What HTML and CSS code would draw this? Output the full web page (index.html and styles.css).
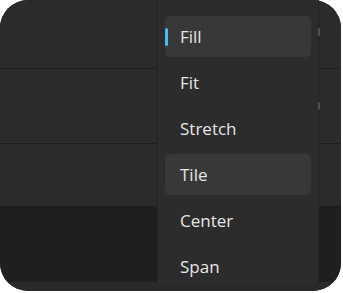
FILE: index.html
```html
<!DOCTYPE html>
<html>
<head>
    <meta charset="UTF-8">
    <title>Choose a fit</title>
    <link rel="stylesheet" href="styles.css">
</head>
<body>
    <div class="frame">
        <div class="settings">
            <div class="setting-row row-1"></div>
            <div class="setting-row row-2"></div>
            <div class="setting-row row-3"></div>
            <div class="setting-dark"></div>
            <div class="setting-foot"></div>
        </div>

        <!-- fit dropdown, open -->
        <div class="fit-menu">
            <div class="fit-item selected">Fill</div>
            <div class="fit-item">Fit</div>
            <div class="fit-item">Stretch</div>
            <div class="fit-item hover">Tile</div>
            <div class="fit-item">Center</div>
            <div class="fit-item">Span</div>
        </div>
        <span class="edge-mark mark-1"></span>
        <span class="edge-mark mark-2"></span>
    </div>
</body>
</html>
```

FILE: styles.css
```css
* {
    margin: 0;
    padding: 0;
    box-sizing: border-box;
}

body {
    background: #ffffff;
    font-family: "Open Sans", "Noto Sans", Arial, sans-serif;
}

.frame {
    position: relative;
    width: 341px;
    height: 291px;
    border-radius: 28px;
    overflow: hidden;
    background: #2b2b2b;
}

.settings {
    display: flex;
    flex-direction: column;
    height: 100%;
}

.setting-row {
    background: #2b2b2b;
    border-bottom: 1px solid #1d1d1d;
}

.row-1 {
    height: 69px;
}

.row-2 {
    height: 75px;
}

.row-3 {
    height: 63px;
}

.setting-dark {
    height: 75px;
    background: #1f1f1f;
}

.setting-foot {
    flex: 1;
    background: #2a2a2a;
}

.fit-menu {
    position: absolute;
    left: 157px;
    top: 0;
    width: 162px;
    height: 282px;
    padding: 16px 7px 0;
    display: flex;
    flex-direction: column;
    gap: 5px;
    background: #2c2c2c;
    border-left: 1px solid #232323;
    border-right: 1px solid #232323;
}

.fit-item {
    position: relative;
    flex: none;
    height: 41px;
    padding-left: 15px;
    border-radius: 5px;
    font-size: 17px;
    font-weight: 500;
    line-height: 41px;
    color: #e6e6e6;
}

.fit-item.selected,
.fit-item.hover {
    background: #383838;
}

.fit-item.selected::before {
    content: "";
    position: absolute;
    left: 0;
    top: 12px;
    width: 3px;
    height: 18px;
    border-radius: 2px;
    background: #4cb8f5;
}

.edge-mark {
    position: absolute;
    left: 318px;
    width: 2px;
    border-radius: 1px;
    background: #4f4f4f;
}

.mark-1 {
    top: 28px;
    height: 8px;
}

.mark-2 {
    top: 102px;
    height: 8px;
}
```
